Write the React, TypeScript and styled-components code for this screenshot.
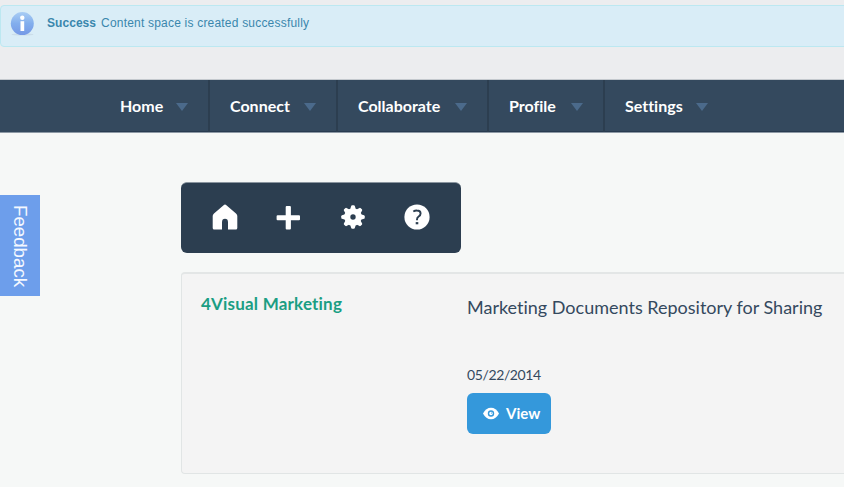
import React from "react";
import styled, { createGlobalStyle } from "styled-components";

const GlobalStyle = createGlobalStyle`
  * { box-sizing: border-box; }
  body { margin: 0; overflow: hidden; background: #f6f8f7; font-family: Lato, sans-serif; color: #34495e; font-variant-ligatures: none; }
`;

const Page = styled.div`
  position: relative;
  width: 844px;
  height: 487px;
  overflow: hidden;
`;

const Header = styled.header`
  height: 80px;
  padding-top: 5px;
  background: #ecedef;
  border-bottom: 1px solid #c4c9ce;
`;

const Alert = styled.div`
  display: flex;
  width: 860px;
  height: 42px;
  padding: 5px 9px;
  background: #d9edf7;
  border: 1px solid #bce8f1;
  border-radius: 4px;
`;

const AlertText = styled.p`
  margin: 5px 0 0 12px;
  font: 12px/15px "Liberation Sans", Arial, sans-serif;
  letter-spacing: 0.2px;
  color: #3a87ad;
`;

const AlertTitle = styled.strong`
  margin-right: 5px;
  letter-spacing: 0.05px;
`;

const Nav = styled.nav`
  display: flex;
  height: 53px;
  padding-left: 100px;
  background: #34495e;
  border-bottom: 1px solid #8d99a5;
`;

const NavItem = styled.a<{ $width: number; $last?: boolean }>`
  display: flex;
  align-items: center;
  justify-content: space-between;
  width: ${(p) => p.$width}px;
  padding: 0 20px 2px 20px;
  border-right: ${(p) => (p.$last ? 0 : 2)}px solid #2c3e50;
  box-shadow: inset 0 -1px #283b50;
  font-size: 16px;
  font-weight: 700;
  color: #fff;
`;

const NavFill = styled.div`
  flex: 1;
  box-shadow: inset 0 -1px #283b50;
`;

const Caret = styled.span`
  margin-top: 4px;
  border: 6px solid transparent;
  border-top: 8px solid #4b6a8b;
  border-bottom: 0;
`;

const Main = styled.main`
  padding: 49px 0 0 181px;
`;

const Toolbar = styled.div`
  display: flex;
  align-items: center;
  justify-content: space-between;
  width: 280px;
  height: 71px;
  padding: 0 31px 3px;
  border-radius: 6px;
  border-top: 1px solid #8a959f;
  background: #2c3e50;
`;

const Tool = styled.svg`
  width: 26px;
  height: 26px;
  fill: #fff;
`;

const Card = styled.section`
  display: grid;
  grid-template-columns: 266px 1fr;
  width: 700px;
  height: 202px;
  margin-top: 19px;
  padding: 19px 0 0 19px;
  background: #f4f4f4;
  border: 1px solid #e1e5e5;
  border-top: 2px solid #e3e6e6;
  border-radius: 4px;
`;

const Title = styled.h2`
  margin: 0;
  font-size: 17px;
  line-height: 22px;
  letter-spacing: 0.2px;
  font-weight: 700;
  color: #1b9e83;
`;

const Details = styled.div`
  display: flex;
  flex-direction: column;
  align-items: flex-start;
`;

const Description = styled.p`
  margin: 2px 0 0;
  font-size: 18px;
  line-height: 24px;
  white-space: nowrap;
`;

const DateText = styled.time`
  margin-top: 46px;
  font-size: 14px;
  line-height: 20px;
  letter-spacing: -0.38px;
`;

const ViewButton = styled.button`
  display: flex;
  align-items: center;
  gap: 7px;
  width: 84px;
  height: 41px;
  margin-top: 8px;
  padding: 0 0 1px 16px;
  border: 0;
  border-radius: 6px;
  background: #3498db;
  font: 700 15px Lato, sans-serif;
  color: #fff;
`;

const Feedback = styled.button`
  position: absolute;
  left: 0;
  top: 195px;
  width: 40px;
  height: 101px;
  padding: 2px 0 0;
  border: 0;
  background: #6d9eeb;
  font: 18.7px "Liberation Sans", Arial, sans-serif;
  color: #f4f8ff;
  writing-mode: vertical-rl;
`;

const InfoIcon = () => (
  <svg width="25" height="30" viewBox="0 0 25 30">
    <defs>
      <linearGradient id="info" x1="0" y1="0" x2="0" y2="1">
        <stop offset="0" stopColor="#a9cdf4" />
        <stop offset="0.5" stopColor="#82aeed" />
        <stop offset="1" stopColor="#7599e6" />
      </linearGradient>
    </defs>
    <ellipse cx="12.5" cy="23.5" rx="11" ry="1" fill="#cbdde9" />
    <circle cx="12.3" cy="12.6" r="11.5" fill="url(#info)" />
    <circle cx="12.3" cy="6.8" r="2.2" fill="#fff" />
    <path d="M10.5 10.2h3.7v9.8h-3.7z" fill="#fff" />
  </svg>
);

const teeth = [0, 45, 90, 135, 180, 225, 270, 315];

const menu = [
  { label: "Home", width: 110 },
  { label: "Connect", width: 128 },
  { label: "Collaborate", width: 151 },
  { label: "Profile", width: 116 },
  { label: "Settings", width: 123 },
];

export default function App() {
  return (
    <Page>
      <GlobalStyle />
      <Header>
        <Alert>
          <InfoIcon />
          <AlertText>
            <AlertTitle>Success</AlertTitle>Content space is created successfully
          </AlertText>
        </Alert>
      </Header>
      <Nav>
        {menu.map((item, i) => (
          <NavItem key={item.label} $width={item.width} $last={i === menu.length - 1}>
            {item.label}
            <Caret />
          </NavItem>
        ))}
        <NavFill />
      </Nav>
      <Main>
        <Toolbar>
          <Tool viewBox="0 0 26 26">
            <path d="M11.6 1.2Q13 0 14.4 1.2L24 9.4Q25.3 10.6 25.3 12V24Q25.3 25.5 23.8 25.5H16V18.2Q16 14.8 13 14.8T10 18.2V25.5H2.2Q.7 25.5 .7 24V12Q.7 10.6 2 9.4Z" />
          </Tool>
          <Tool viewBox="0 0 26 26">
            <path d="M10.7 2h3.2q1 0 1 1v8.3h8.1q1 0 1 1v3q0 1-1 1h-8.1v8.3q0 1-1 1h-3.2q-1 0-1-1v-8.3H1.6q-1 0-1-1v-3q0-1 1-1h8.1V3q0-1 1-1z" />
          </Tool>
          <Tool viewBox="-0.5 0 27 26">
            {teeth.map((angle) => (
              <path key={angle} d="M9.8 6 11.1 1.5Q11.4.8 12.2.8h1.6q.8 0 1.1.7L16.2 6z" transform={`rotate(${angle} 13 13)`} />
            ))}
            <path fillRule="evenodd" d="M13 3.9a9.1 9.1 0 1 0 0 18.2 9.1 9.1 0 0 0 0-18.2zm0 6.3a2.8 2.8 0 1 1 0 5.6 2.8 2.8 0 0 1 0-5.6z" />
          </Tool>
          <Tool viewBox="0 0 26 26">
            <circle cx="13" cy="13" r="12.6" />
            <path d="M9.3 7.5Q11 6.4 13 6.5q3.6.1 3.6 3.1 0 1.7-1.9 2.9Q13 13.6 13 15.4v.8" fill="none" stroke="#2c3e50" strokeWidth="1.9" />
            <path d="M11.7 18.1h2.6v2.2h-2.6z" fill="#2c3e50" />
          </Tool>
        </Toolbar>
        <Card>
          <Title>4Visual Marketing</Title>
          <Details>
            <Description>Marketing Documents Repository for Sharing</Description>
            <DateText>05/22/2014</DateText>
            <ViewButton>
              <svg width="16" height="13" viewBox="0 0 16 13">
                <path d="M0 6.5Q3 .7 8 .7t8 5.8Q13 12.3 8 12.3T0 6.5z" fill="#fff" />
                <circle cx="8" cy="6.5" r="2.5" fill="#fff" stroke="#3498db" strokeWidth="1.4" />
                <circle cx="8.5" cy="6" r=".6" fill="#3498db" />
              </svg>
              View
            </ViewButton>
          </Details>
        </Card>
      </Main>
      <Feedback>Feedback</Feedback>
    </Page>
  );
}
